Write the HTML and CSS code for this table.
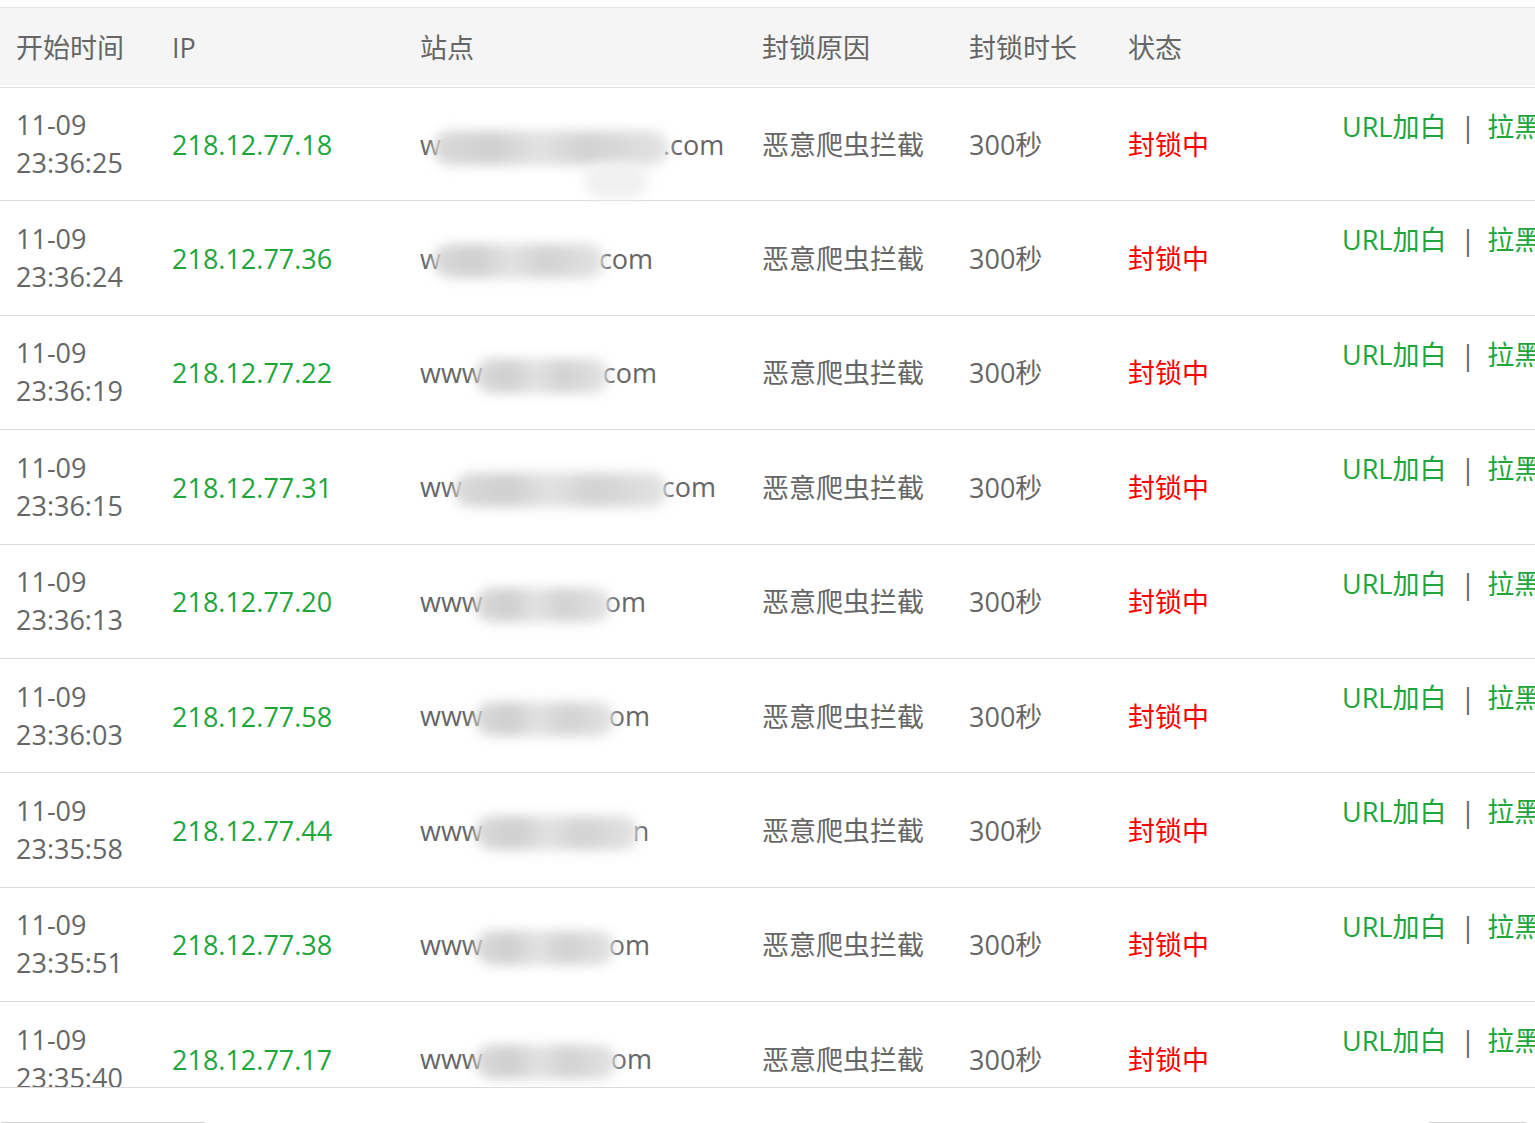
FILE: index.html
```html
<!DOCTYPE html>
<html lang="zh-CN">
<head>
<meta charset="utf-8">
<title>封锁记录</title>
<link rel="stylesheet" href="styles.css">
</head>
<body>
<div class="page">
  <div class="table-wrap">
    <table class="log-table">
      <colgroup>
        <col class="c-time"><col class="c-ip"><col class="c-site"><col class="c-reason"><col class="c-dur"><col class="c-status"><col class="c-act">
      </colgroup>
      <thead>
        <tr><th>开始时间</th><th>IP</th><th>站点</th><th>封锁原因</th><th>封锁时长</th><th>状态</th><th></th></tr>
      </thead>
      <tbody>
        <tr>
          <td class="time">11-09<br>23:36:25</td><td class="ip">218.12.77.18</td>
          <td class="site"><span>w</span><span class="blur" style="width:236px"></span><span>.com</span><span class="blur-tail"></span></td>
          <td>恶意爬虫拦截</td><td>300秒</td><td class="status">封锁中</td>
          <td class="act"><a>URL加白</a><span class="sep">|</span><a>拉黑</a></td>
        </tr>
        <tr>
          <td class="time">11-09<br>23:36:24</td><td class="ip">218.12.77.36</td>
          <td class="site"><span>w</span><span class="blur" style="width:172px"></span><span>com</span></td>
          <td>恶意爬虫拦截</td><td>300秒</td><td class="status">封锁中</td>
          <td class="act"><a>URL加白</a><span class="sep">|</span><a>拉黑</a></td>
        </tr>
        <tr>
          <td class="time">11-09<br>23:36:19</td><td class="ip">218.12.77.22</td>
          <td class="site"><span>www</span><span class="blur" style="width:134px"></span><span>com</span></td>
          <td>恶意爬虫拦截</td><td>300秒</td><td class="status">封锁中</td>
          <td class="act"><a>URL加白</a><span class="sep">|</span><a>拉黑</a></td>
        </tr>
        <tr>
          <td class="time">11-09<br>23:36:15</td><td class="ip">218.12.77.31</td>
          <td class="site"><span>ww</span><span class="blur" style="width:214px"></span><span>com</span></td>
          <td>恶意爬虫拦截</td><td>300秒</td><td class="status">封锁中</td>
          <td class="act"><a>URL加白</a><span class="sep">|</span><a>拉黑</a></td>
        </tr>
        <tr>
          <td class="time">11-09<br>23:36:13</td><td class="ip">218.12.77.20</td>
          <td class="site"><span>www</span><span class="blur" style="width:136px"></span><span>om</span></td>
          <td>恶意爬虫拦截</td><td>300秒</td><td class="status">封锁中</td>
          <td class="act"><a>URL加白</a><span class="sep">|</span><a>拉黑</a></td>
        </tr>
        <tr>
          <td class="time">11-09<br>23:36:03</td><td class="ip">218.12.77.58</td>
          <td class="site"><span>www</span><span class="blur" style="width:140px"></span><span>om</span></td>
          <td>恶意爬虫拦截</td><td>300秒</td><td class="status">封锁中</td>
          <td class="act"><a>URL加白</a><span class="sep">|</span><a>拉黑</a></td>
        </tr>
        <tr>
          <td class="time">11-09<br>23:35:58</td><td class="ip">218.12.77.44</td>
          <td class="site"><span>www</span><span class="blur" style="width:164px"></span><span>n</span></td>
          <td>恶意爬虫拦截</td><td>300秒</td><td class="status">封锁中</td>
          <td class="act"><a>URL加白</a><span class="sep">|</span><a>拉黑</a></td>
        </tr>
        <tr>
          <td class="time">11-09<br>23:35:51</td><td class="ip">218.12.77.38</td>
          <td class="site"><span>www</span><span class="blur" style="width:140px"></span><span>om</span></td>
          <td>恶意爬虫拦截</td><td>300秒</td><td class="status">封锁中</td>
          <td class="act"><a>URL加白</a><span class="sep">|</span><a>拉黑</a></td>
        </tr>
        <tr>
          <td class="time">11-09<br>23:35:40</td><td class="ip">218.12.77.17</td>
          <td class="site"><span>www</span><span class="blur" style="width:142px"></span><span>om</span></td>
          <td>恶意爬虫拦截</td><td>300秒</td><td class="status">封锁中</td>
          <td class="act"><a>URL加白</a><span class="sep">|</span><a>拉黑</a></td>
        </tr>
      </tbody>
    </table>
  </div>
  <div class="footer">
    <div class="box box-left"></div>
    <div class="box box-right"></div>
  </div>
</div>
</body>
</html>
```
FILE: styles.css
```css
html, body {
  margin: 0;
  padding: 0;
  background: #fff;
  overflow: hidden;
}
body {
  font-family: "Open Sans", "Noto Sans CJK SC", sans-serif;
  font-size: 27px;
  color: #666;
}
.page {
  padding-top: 7px;
  width: 1535px;
  overflow: hidden;
}
.table-wrap {
  border-top: 1px solid #e4e4e4;
  border-bottom: 1px solid #dcdcdc;
  height: 1079px;
  overflow: hidden;
  width: 1760px;
}
.log-table {
  border-collapse: separate;
  border-spacing: 0;
  table-layout: fixed;
  width: 1760px;
}
.c-time { width: 156px; }
.c-ip { width: 248px; }
.c-site { width: 342px; }
.c-reason { width: 207px; }
.c-dur { width: 159px; }
.c-status { width: 214px; }
.c-act { width: 434px; }
.log-table th {
  box-sizing: border-box;
  height: 79px;
  padding: 2px 16px 0;
  text-align: left;
  font-weight: normal;
  color: #666;
  background: #f5f5f5;
  border-bottom: 2px solid #fff;
  line-height: 38px;
  background-clip: padding-box;
}
.log-table tbody tr:first-child td {
  border-top: 1px solid #e2e2e2;
}
.log-table td {
  box-sizing: border-box;
  height: 114.4px;
  padding: 2px 16px 0;
  border-bottom: 1px solid #dcdcdc;
  line-height: 38px;
  white-space: nowrap;
  vertical-align: middle;
}
.log-table td.time {
  padding-top: 0;
}
.ip { color: #20a53a; }
.status { color: #f00; }
.site { position: relative; }
.blur {
  display: inline-block;
  height: 34px;
  vertical-align: middle;
  margin: 0 -6px 0 -8px;
  border-radius: 17px;
  background: linear-gradient(90deg, #dadada 0%, #cfcfcf 25%, #e2e2e2 45%, #d2d2d2 65%, #dcdcdc 85%, #e4e4e4 100%);
  filter: blur(6px);
}
.blur-tail {
  position: absolute;
  left: 180px;
  top: 76px;
  width: 64px;
  height: 34px;
  border-radius: 17px;
  background: #f0f0f0;
  filter: blur(6px);
}
.act {
  vertical-align: top !important;
  padding-top: 20px !important;
}
.act a {
  color: #20a53a;
  text-decoration: none;
}
.sep {
  color: #666;
  margin: 0 12px 0 14px;
}
.footer {
  display: flex;
  justify-content: space-between;
  margin-top: 34px;
  padding-right: 7px;
}
.box {
  height: 40px;
  border: 1px solid #cfcfcf;
  border-radius: 3px;
  box-sizing: border-box;
}
.box-left { width: 206px; border-left: 0; }
.box-right { width: 101px; }
```
